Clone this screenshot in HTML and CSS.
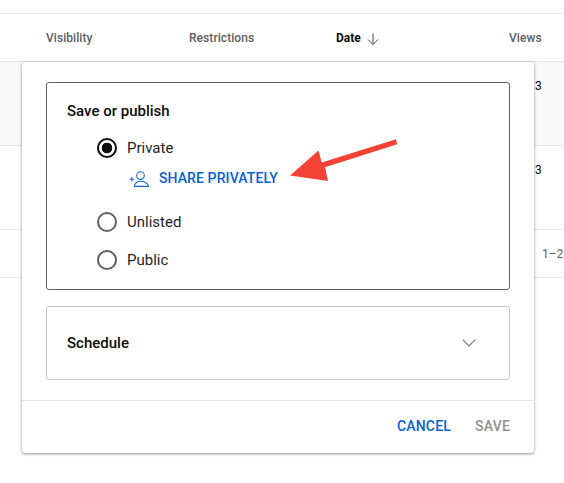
FILE: index.html
```html
<!DOCTYPE html>
<html lang="en">
<head>
  <meta charset="UTF-8">
  <title>Save or publish</title>
  <link rel="stylesheet" href="styles.css">
</head>
<body>

<section class="table">
  <div class="table-head">
    <span class="col-visibility">Visibility</span>
    <span class="col-restrictions">Restrictions</span>
    <span class="col-date">Date
      <svg class="sort-icon" width="14" height="14" viewBox="0 0 14 14"><path d="M7 1.5V12.5M2 7.5L7 12.5L12 7.5" fill="none" stroke="#444" stroke-width="1"/></svg>
    </span>
    <span class="col-views">Views</span>
  </div>
  <div class="table-row row-hover"><span class="row-count">3</span></div>
  <div class="table-row"><span class="row-count">3</span></div>
  <div class="table-foot"><span>1–2</span></div>
</section>

<div class="dialog">
  <div class="dialog-body">
    <div class="box box-publish">
      <h2>Save or publish</h2>
      <div class="radio-group">
        <div class="radio-line">
          <span class="radio radio-on"></span>
          <span>Private</span>
        </div>
        <div class="share">
          <svg class="share-icon" width="20" height="16" viewBox="0 0 20 16" fill="none" stroke="#1a68d8" stroke-width="1.1">
            <circle cx="11.5" cy="4.6" r="3.8"/>
            <path d="M5.3 15.4C5.3 11.8 9 10.2 11.8 10.2C14.6 10.2 19.2 11.8 19.5 15.4Z"/>
            <path d="M.6 8.3H5M2.8 6.1V10.5"/>
          </svg>
          <span>SHARE PRIVATELY</span>
        </div>
        <div class="radio-line line-unlisted">
          <span class="radio"></span>
          <span>Unlisted</span>
        </div>
        <div class="radio-line line-public">
          <span class="radio"></span>
          <span>Public</span>
        </div>
      </div>
    </div>
    <div class="box box-schedule">
      <h2>Schedule</h2>
      <svg width="14" height="8" viewBox="0 0 14 8"><path d="M.7.7L7 7L13.3.7" fill="none" stroke="#757575" stroke-width="1.1"/></svg>
    </div>
  </div>
  <div class="dialog-foot">
    <span class="btn-cancel">CANCEL</span>
    <span class="btn-save">SAVE</span>
  </div>
</div>

<svg class="arrow" width="112" height="46" viewBox="0 0 112 46">
  <path d="M108 1.3L109.2 6.3L37 29.2L40 43L2 37.5L30.5 12.5L33.7 24.6Z" fill="#f44336"/>
</svg>

</body>
</html>
```

FILE: styles.css
```css
body {
  margin: 0;
  height: 483px;
  position: relative;
  overflow: hidden;
  background: #fff;
  font-family: Roboto, "Liberation Sans", sans-serif;
  color: #0d0d0d;
}

.table {
  padding-top: 13px;
}

.table-head {
  display: flex;
  align-items: center;
  height: 47px;
  border-top: 1px solid #e5e5e5;
  border-bottom: 1px solid #e5e5e5;
  font-size: 12px;
  font-weight: 500;
  letter-spacing: 0.06px;
  color: #606060;
}

.col-visibility {
  margin-left: 46px;
  width: 143px;
}

.col-restrictions {
  width: 147px;
}

.col-date {
  display: flex;
  align-items: center;
  gap: 5px;
  width: 173px;
  font-weight: 700;
  letter-spacing: 0;
  color: #0d0d0d;
}

.sort-icon {
  margin-top: 2px;
}

.table-row {
  height: 83px;
  border-bottom: 1px solid #e5e5e5;
  padding-left: 535px;
  font-size: 12px;
}

.row-count {
  display: block;
  padding-top: 17px;
}

.row-hover {
  background-color: #f9f9f9;
  background-image: radial-gradient(#f1f1f1 0.6px, transparent 0.7px);
  background-size: 2px 2px;
}

.table-foot {
  height: 47px;
  line-height: 49px;
  border-bottom: 1px solid #e5e5e5;
  padding-left: 542px;
  font-size: 12px;
  color: #606060;
  white-space: nowrap;
}

.dialog {
  position: absolute;
  left: 22px;
  top: 62px;
  width: 512px;
  height: 391px;
  display: flex;
  flex-direction: column;
  background: #fff;
  border-radius: 3px;
  box-shadow: 0 1px 3px rgba(0, 0, 0, 0.4), 0 0 5px rgba(0, 0, 0, 0.08);
}

.dialog-body {
  flex: 1;
  padding: 20px 24px 0;
  display: flex;
  flex-direction: column;
  gap: 16px;
}

.box {
  border-radius: 3px;
  box-sizing: border-box;
}

.box h2 {
  margin: 0;
  font-size: 15px;
  font-weight: 500;
  line-height: 20px;
}

.box-publish {
  height: 208px;
  border: 1px solid #606060;
  padding: 18px 20px;
}

.radio-group {
  margin: 15px 0 0 30px;
  font-size: 15px;
  color: #1f1f1f;
}

.radio-line {
  display: flex;
  align-items: center;
  gap: 10px;
  height: 24px;
}

.line-unlisted {
  margin-top: 22px;
}

.line-public {
  margin-top: 14px;
}

.radio {
  width: 20px;
  height: 20px;
  box-sizing: border-box;
  border: 2px solid #606060;
  border-radius: 50%;
}

.radio-on {
  border-color: #0d0d0d;
  background: radial-gradient(circle, #0d0d0d 0 5px, transparent 5.6px);
}

.share {
  display: flex;
  align-items: center;
  gap: 10px;
  height: 20px;
  margin: 8px 0 0 32px;
  font-size: 14px;
  font-weight: 500;
  color: #065fd4;
  letter-spacing: 0.1px;
}

.share-icon {
  margin-top: 1px;
}

.box-schedule {
  height: 74px;
  border: 1px solid #c6c6c6;
  padding: 0 33px 0 20px;
  display: flex;
  align-items: center;
  justify-content: space-between;
}

.dialog-foot {
  height: 50px;
  padding: 0 24px 2px;
  border-top: 1px solid #e5e5e5;
  display: flex;
  align-items: center;
  justify-content: flex-end;
  gap: 24px;
  font-size: 14px;
  font-weight: 500;
  letter-spacing: 0.2px;
}

.btn-cancel {
  color: #065fd4;
}

.btn-save {
  color: #909090;
}

.arrow {
  position: absolute;
  left: 288px;
  top: 138px;
}
```
